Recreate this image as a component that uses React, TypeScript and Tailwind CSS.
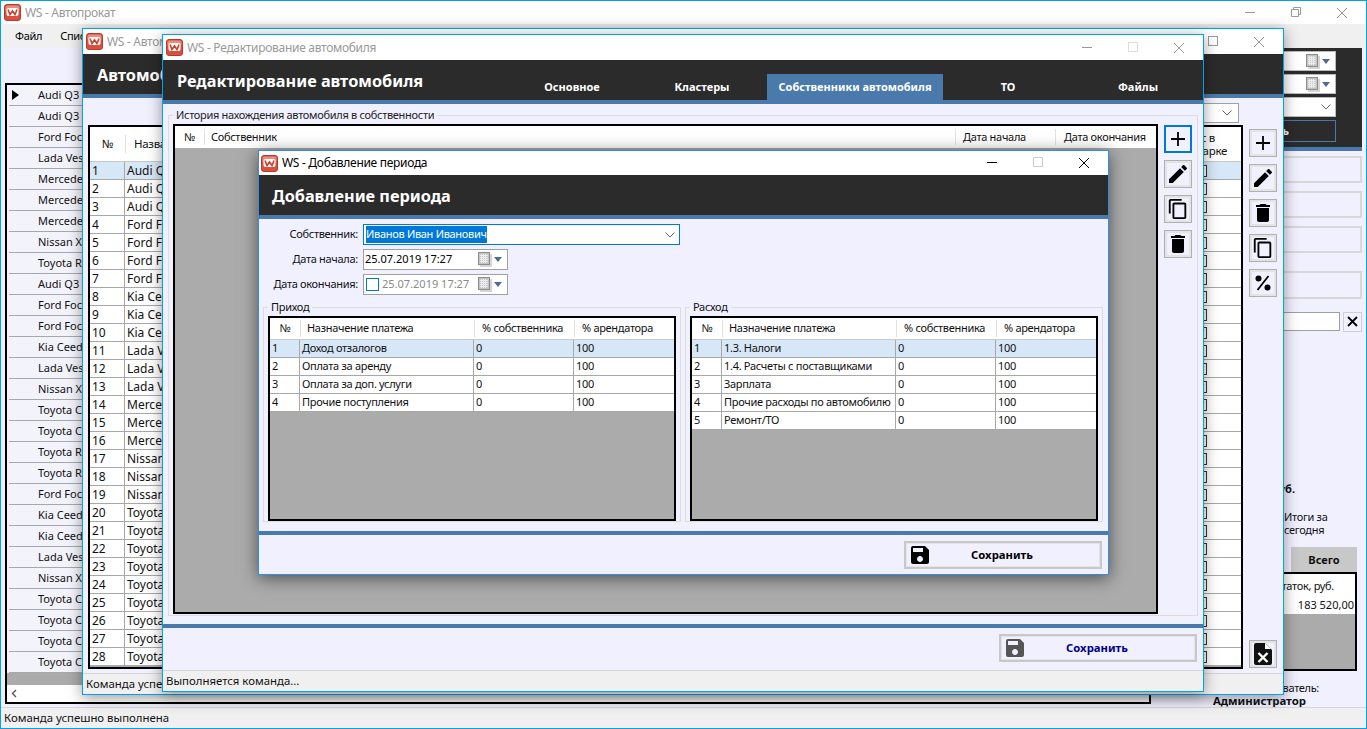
import type { ReactNode } from 'react'
import { MdContentCopy, MdDelete, MdEdit, MdSave } from 'react-icons/md'

const mainRows = [
  'Audi Q3', 'Audi Q3', 'Ford Focus', 'Lada Vesta', 'Mercedes', 'Mercedes', 'Mercedes', 'Nissan X-Trail', 'Toyota RAV4',
  'Audi Q3', 'Ford Focus', 'Ford Focus', 'Kia Ceed', 'Lada Vesta', 'Nissan X-Trail', 'Toyota Camry', 'Toyota Camry',
  'Toyota RAV4', 'Toyota RAV4', 'Ford Focus', 'Kia Ceed', 'Kia Ceed', 'Lada Vesta', 'Nissan X-Trail', 'Toyota Camry',
  'Toyota Camry', 'Toyota Camry', 'Toyota Camry',
]

const carRows = [
  'Audi Q3', 'Audi Q3', 'Audi Q3', 'Ford Focus', 'Ford Focus', 'Ford Focus', 'Ford Focus', 'Kia Ceed', 'Kia Ceed', 'Kia Ceed',
  'Lada Vesta', 'Lada Vesta', 'Lada Vesta', 'Mercedes', 'Mercedes', 'Mercedes', 'Nissan X-Trail', 'Nissan X-Trail', 'Nissan X-Trail',
  'Toyota Camry', 'Toyota Camry', 'Toyota Camry', 'Toyota Camry', 'Toyota Camry', 'Toyota Camry', 'Toyota Camry', 'Toyota Camry', 'Toyota Camry',
]

const incomeRows = ['Доход отзалогов', 'Оплата за аренду', 'Оплата за доп. услуги', 'Прочие поступления']
const expenseRows = ['1.3. Налоги', '1.4. Расчеты с поставщиками', 'Зарплата', 'Прочие расходы по автомобилю', 'Ремонт/ТО']
const tabs = [
  { label: 'Основное', width: 'w-[130px]' },
  { label: 'Кластеры', width: 'w-[130px]' },
  { label: 'Собственники автомобиля', width: 'w-[176px]', active: true },
  { label: 'ТО', width: 'w-[130px]' },
  { label: 'Файлы', width: 'w-[130px]' },
]

const Logo = () => (
  <svg width="17" height="17" viewBox="0 0 17 17" className="shrink-0">
    <rect x="0.5" y="0.5" width="16" height="16" rx="2.5" fill="#d9503f" stroke="#b63a2c" />
    <rect x="1.5" y="1.5" width="14" height="6" rx="2" fill="#ea8c7e" />
    <rect x="2.5" y="4" width="12" height="8" rx="2" fill="#fff" />
    <path d="M4 5.500 L6 10.500 L8.500 7 L11 10.500 L13 5.500" fill="none" stroke="#c8402f" strokeWidth="1.6" />
  </svg>
)

const WinControls = ({ tone, maxTone, restore }: { tone: string; maxTone: string; restore?: boolean }) => (
  <div className="flex pr-px" style={{ color: tone }}>
    <div className="flex h-full w-[46px] items-center justify-center">
      <svg width="10" height="10"><path d="M0 5.500H10" stroke="currentColor" /></svg>
    </div>
    <div className="flex h-full w-[46px] items-center justify-center">
      {restore ? (
        <svg width="10" height="10"><path d="M.5 2.500h7v7h-7zM2.500 2.500v-2h7v7h-2" fill="none" stroke="currentColor" /></svg>
      ) : (
        <svg width="10" height="10"><rect x=".5" y=".5" width="9" height="9" fill="none" stroke={maxTone} /></svg>
      )}
    </div>
    <div className="flex h-full w-[46px] items-center justify-center">
      <svg width="12" height="12"><path d="M1 1L11 11M11 1L1 11" stroke="currentColor" /></svg>
    </div>
  </div>
)

const TitleBar = ({ title, active, height, restore, maxTone = '#ddd' }: { title: string; active?: boolean; height: string; restore?: boolean; maxTone?: string }) => (
  <div className={`flex shrink-0 items-center justify-between bg-white ${active ? 'pl-[2px]' : 'pl-[3px]'} ${height}`}>
    <div className="flex items-center gap-[4px]">
      <Logo />
      <span className={`text-[12px] ${active ? 'text-black' : 'text-[#999]'}`}>{title}</span>
    </div>
    <WinControls tone={active ? '#000' : '#999'} maxTone={maxTone} restore={restore} />
  </div>
)

const Strip = () => <div className="h-1 shrink-0 bg-[#4a79ab]" />

const Header = ({ title, children, tight }: { title: string; children?: ReactNode; tight?: boolean }) => (
  <>
    <div className={`flex h-10 shrink-0 items-center bg-[#2b2b2b] ${tight ? 'pl-[13px]' : 'pl-[14px]'}`}>
      <span className="pt-[2px] text-[16.3px] font-bold tracking-normal whitespace-nowrap text-white">{title}</span>
      {children}
    </div>
    <Strip />
  </>
)

const StatusBar = ({ text }: { text: string }) => (
  <div className="flex h-[21px] shrink-0 items-center border-t border-[#d6d6d6] bg-[#f0f0f0] pl-[3px] text-[11.4px] tracking-normal text-[#111]">{text}</div>
)

const ToolButton = ({ children, focused }: { children: ReactNode; focused?: boolean }) => (
  <button
    className={`flex h-[28px] w-[28px] items-center justify-center bg-[#f0f0ff] text-black ${
      focused ? 'border-2 border-[#0078d7]' : 'border border-[#b0b0b0] shadow-[inset_0_0_0_2px_#e4e4e4]'
    }`}
  >
    {children}
  </button>
)

const PlusIcon = () => (
  <svg width="16" height="16"><path d="M8 1V15M1 8H15" stroke="currentColor" strokeWidth="1.8" /></svg>
)

const PercentIcon = () => (
  <svg width="18" height="18" viewBox="0 0 18 18">
    <circle cx="4.500" cy="4.500" r="3" fill="currentColor" />
    <circle cx="13.500" cy="13.500" r="3" fill="currentColor" />
    <path d="M14.500 2L3.500 16" stroke="currentColor" strokeWidth="1.8" />
  </svg>
)

const FileXIcon = () => (
  <svg width="18" height="22" viewBox="0 0 18 22">
    <path d="M0 2a2 2 0 0 1 2-2h9l7 7v13a2 2 0 0 1-2 2H2a2 2 0 0 1-2-2z" fill="#111" />
    <path d="M11 0v6h6z" fill="#fff" />
    <path d="M4.500 10L13.500 19M13.500 10L4.500 19" stroke="#fff" strokeWidth="2.4" />
  </svg>
)

const CalendarArrow = () => (
  <div className="flex items-center gap-[2px]">
    <svg width="14" height="15" viewBox="0 0 14 15">
      <rect x="2" y="2" width="12" height="13" fill="#d5d5d5" />
      <rect x=".5" y=".5" width="11" height="12" fill="#c4c4c4" stroke="#8c8c8c" />
      <path d="M2 3.500h8M2 5.500h8M2 7.500h8M2 9.500h8M3.500 2v9M5.500 2v9M7.500 2v9" stroke="#ededed" />
    </svg>
    <svg width="9" height="5"><path d="M0 0H8L4 5z" fill="#4f6b94" /></svg>
  </div>
)

const Chevron = () => (
  <svg width="10" height="6" className="shrink-0"><path d="M.5 .5L5 5L9.500 .5" fill="none" stroke="#666" /></svg>
)

const SaveButton = ({ label, inactive }: { label: string; inactive?: boolean }) => (
  <button className="flex h-[28px] w-[198px] items-center border-2 border-[#c8c8c8] bg-[#f0f0ff] pl-[2px] shadow-[inset_0_0_0_1px_#e4e4e4]">
    <MdSave size={24} className={`shrink-0 ${inactive ? 'text-[#555]' : 'text-black'}`} />
    <span className={`flex-1 pr-[28px] text-center text-[11.3px] font-bold tracking-normal ${inactive ? 'text-[#00008b]' : 'text-black'}`}>{label}</span>
  </button>
)

const PeriodTable = ({ rows }: { rows: string[] }) => (
  <div className="flex h-[205px] flex-col border-2 border-black bg-[#ababab]">
    <div className="flex h-[22px] shrink-0 items-center border-b border-[#c8c8c8] bg-white">
      <div className="w-[30px] text-center">№</div>
      <div className="w-[174px] border-l border-[#e2e2e2] pl-[6px]">Назначение платежа</div>
      <div className="w-[100px] border-l border-[#e2e2e2] pl-[7px]">% собственника</div>
      <div className="w-[100px] border-l border-[#e2e2e2] pl-[7px]">% арендатора</div>
    </div>
    {rows.map((name, i) => (
      <div key={name} className={`flex h-[18px] shrink-0 items-center border-b border-[#a8a8a8] ${i === 0 ? 'bg-[#d6e7f7]' : 'bg-white'}`}>
        <div className="h-full w-[30px] border-r border-[#a8a8a8] pl-[2px]">{i + 1}</div>
        <div className="h-full w-[174px] border-r border-[#a8a8a8] pl-[2px] whitespace-nowrap">{name}</div>
        <div className="h-full w-[100px] border-r border-[#a8a8a8] pl-[2px]">0</div>
        <div className="h-full w-[100px] pl-[2px]">100</div>
      </div>
    ))}
  </div>
)

const PeriodGroup = ({ title, rows, width }: { title: string; rows: string[]; width: string }) => (
  <fieldset className={`h-[222px] border border-[#dcdcdc] px-[4px] pt-[2px] ${width}`}>
    <legend className="h-[14px] px-[3px] leading-[14px]">{title}</legend>
    <PeriodTable rows={rows} />
  </fieldset>
)

const DateField = ({ muted }: { muted?: boolean }) => (
  <div className="flex h-[21px] w-[145px] items-center justify-between border border-[#a0a0a0] bg-white pr-[4px] pl-[1px]">
    <div className="flex items-center gap-[3px]">
      {muted && <div className="ml-px h-[13px] w-[13px] border border-[#0078d7] bg-white" />}
      <span className={`tracking-normal ${muted ? 'text-[#8a8a8a]' : 'text-black'}`}>25.07.2019 17:27</span>
    </div>
    <CalendarArrow />
  </div>
)

const MainWindow = () => (
  <div className="absolute inset-0 flex flex-col border border-[#00a2ed] bg-[#f0f0ff]">
    <TitleBar title="WS - Автопрокат" height="h-[23px]" restore />
    <div className="flex h-[24px] shrink-0 items-center gap-[18px] bg-[#f0f0f0] pl-[14px] text-[11px] text-black">
      <span>Файл</span>
      <span>Списки</span>
    </div>
    <div className="flex min-h-0 flex-1 pl-[4px]">
      <div className="mt-[35px] flex h-[621px] w-[1146px] flex-col border-2 border-black bg-[#ababab] tracking-normal">
        <div className="bg-[#f3f3fb] pl-[2px]">
          {mainRows.map((name, i) => (
            <div key={i} className="flex h-[21px] shrink-0 items-center border-b border-[#a8a8a8] pl-[2px]">
              <div className="flex w-[27px] justify-start pl-[1px]">
                {i === 0 && <svg width="7" height="10"><path d="M0 0L7 5L0 10z" fill="#000" /></svg>}
              </div>
              <span>{name}</span>
            </div>
          ))}
        </div>
        <div className="flex-1" />
        <div className="flex h-[17px] shrink-0 items-center bg-white pl-[4px]">
          <svg width="6" height="9"><path d="M5 1L1.500 4.500L5 8" fill="none" stroke="#555" strokeWidth="1.4" /></svg>
        </div>
      </div>
      <div className="flex w-[211px] flex-col">
        <div className="flex h-[100px] flex-col items-end gap-[3px] bg-[#2b2b2b] pt-[3px] pr-[26px]">
          <div className="flex h-[20px] w-[150px] items-center justify-end border border-[#bbb] bg-white pr-[4px]"><CalendarArrow /></div>
          <div className="flex h-[20px] w-[150px] items-center justify-end border border-[#bbb] bg-white pr-[4px]"><CalendarArrow /></div>
          <div className="flex h-[20px] w-[150px] items-center justify-end border border-[#bbb] bg-white pr-[4px]"><Chevron /></div>
          <div className="flex h-[22px] w-[150px] items-center justify-end border border-[#4a79ab] pr-[46px] font-bold tracking-normal text-white">Применить</div>
        </div>
        <Strip />
        <div className="flex flex-col gap-[8px] pt-[5px] pl-[10px]">
          <div className="h-[27px] border-2 border-[#d8d8d8]" />
          <div className="h-[27px] border-2 border-[#d8d8d8]" />
          <div className="h-[27px] border-2 border-[#d8d8d8]" />
          <div className="mt-[10px] h-[28px] border-2 border-[#d8d8d8]" />
        </div>
        <div className="mt-[13px] flex h-[20px] items-center gap-[3px] pl-[10px]">
          <div className="h-[19px] flex-1 border border-[#a0a0a0] bg-white" />
          <div className="flex h-[20px] w-[19px] items-center justify-center border border-[#d0d0d0]">
            <svg width="11" height="11"><path d="M1 1L10 10M10 1L1 10" stroke="#000" strokeWidth="1.8" /></svg>
          </div>
        </div>
        <div className="mt-[149px] pr-[67px] text-right text-[11px] font-bold tracking-normal">Итого, руб.</div>
        <div className="mt-[13px] pl-[133px] text-[11px] leading-[13px]">
          <div>Итоги за</div>
          <div>сегодня</div>
        </div>
        <div className="mt-[11px] ml-[140px] flex h-[25px] w-[66px] items-center justify-center bg-[#c8c8c8] font-bold tracking-normal">Всего</div>
        <div className="mr-[5px] flex h-[100px] flex-col border-2 border-black bg-[#ababab]">
          <div className="h-[23px] bg-white pt-[4px] pr-[21px] text-right">Остаток, руб.</div>
          <div className="h-[17px] bg-white pr-[1px] text-right tracking-normal">183 520,00</div>
        </div>
        <div className="mt-[10px] pr-[43px] text-right leading-[13px]">Пользователь:</div>
        <div className="pr-[56px] text-right text-[11.4px] leading-[13px] font-bold tracking-normal whitespace-nowrap">Администратор</div>
      </div>
    </div>
    <StatusBar text="Команда успешно выполнена" />
  </div>
)

const CarsWindow = () => (
  <div className="absolute top-[28px] left-[82px] flex h-[667px] w-[1202px] flex-col border border-[#00a2ed] bg-[#f0f0ff] shadow-[0_3px_14px_rgba(0,0,0,0.4)]">
    <TitleBar title="WS - Автомобили" height="h-[25px]" maxTone="#999" />
    <Header title="Автомобили" />
    <div className="flex min-h-0 flex-1 pl-[5px]">
      <div className="flex w-[1155px] flex-col">
        <div className="flex h-[27px] items-start justify-end pt-[5px] pr-[4px]">
          <div className="flex h-[20px] w-[190px] items-center justify-end border border-[#a0a0a0] bg-white pr-[6px]"><Chevron /></div>
        </div>
        <div className="flex h-[544px] flex-col border-2 border-black bg-[#ababab]">
          <div className="flex h-[35px] shrink-0 items-center border-b border-[#c8c8c8] bg-white text-[11.500px]">
            <div className="w-[35px] text-center">№</div>
            <div className="flex-1 border-l border-[#e2e2e2] pl-[8px]">Название</div>
            <div className="flex w-[60px] flex-col items-end leading-[13px] whitespace-nowrap">
              <div className="mr-[26px]">Статус в</div>
              <div className="mr-[14px]">парке</div>
            </div>
          </div>
          {carRows.map((name, i) => (
            <div key={i} className={`flex h-[18px] shrink-0 items-center border-b border-[#a8a8a8] tracking-normal ${i === 0 ? 'bg-[#d6e7f7]' : 'bg-white'}`}>
              <div className="h-full w-[35px] border-r border-[#a8a8a8] pl-[2px] text-[12px]">{i + 1}</div>
              <div className="h-full flex-1 pl-[2px] text-[12px]">{name}</div>
              <div className="flex h-full w-[60px] items-center pl-[14px]">
                <svg width="12" height="12"><rect x=".5" y=".5" width="11" height="11" fill="#fff" stroke="#333" /><path d="M3 6L5 9L9 3" fill="none" stroke="#444" /></svg>
              </div>
            </div>
          ))}
        </div>
      </div>
      <div className="flex flex-col gap-[7px] pt-[31px] pl-[6px]">
        <ToolButton><PlusIcon /></ToolButton>
        <ToolButton><MdEdit size={24} /></ToolButton>
        <ToolButton><MdDelete size={24} /></ToolButton>
        <ToolButton><MdContentCopy size={22} /></ToolButton>
        <ToolButton><PercentIcon /></ToolButton>
        <div className="mt-[336px]"><ToolButton><FileXIcon /></ToolButton></div>
      </div>
    </div>
    <StatusBar text="Команда успешно выполнена" />
  </div>
)

const EditWindow = () => (
  <div className="absolute top-[34px] left-[162px] flex h-[658px] w-[1042px] flex-col border border-[#00a2ed] bg-[#f0f0ff] shadow-[0_3px_14px_rgba(0,0,0,0.4)]">
    <TitleBar title="WS - Редактирование автомобиля" height="h-[25px]" />
    <Header title="Редактирование автомобиля">
      <div className="ml-auto flex h-full items-end font-bold tracking-normal text-white">
        {tabs.map((tab) => (
          <div key={tab.label} className={`flex h-[26px] items-center justify-center ${tab.width} ${tab.active ? 'bg-[#4a79ab]' : ''}`}>
            {tab.label}
          </div>
        ))}
      </div>
    </Header>
    <div className="flex h-[520px] shrink-0 gap-[6px] pt-[4px] pl-[5px]">
      <fieldset className="flex h-[508px] w-[1030px] gap-[6px] border border-[#dcdcdc] pt-[2px] pr-[4px] pl-[4px]">
        <legend className="h-[14px] px-[3px] leading-[14px] text-[#222]">История нахождения автомобиля в собственности</legend>
        <div className="flex h-[490px] w-[985px] flex-col border-2 border-black bg-[#ababab]">
          <div className="flex h-[22px] shrink-0 items-center bg-white">
            <div className="w-[29px] text-center">№</div>
            <div className="flex-1 border-l border-[#e2e2e2] pl-[6px]">Собственник</div>
            <div className="w-[100px] border-l border-[#e2e2e2] pl-[7px]">Дата начала</div>
            <div className="w-[101px] border-l border-[#e2e2e2] pl-[8px] whitespace-nowrap">Дата окончания</div>
          </div>
        </div>
        <div className="flex flex-col gap-[7px] pt-[1px]">
          <ToolButton focused><PlusIcon /></ToolButton>
          <ToolButton><MdEdit size={24} /></ToolButton>
          <ToolButton><MdContentCopy size={22} /></ToolButton>
          <ToolButton><MdDelete size={24} /></ToolButton>
        </div>
      </fieldset>
    </div>
    <Strip />
    <div className="flex flex-1 justify-end pt-[6px] pr-[6px]">
      <SaveButton label="Сохранить" inactive />
    </div>
    <StatusBar text="Выполняется команда..." />
  </div>
)

const FormRow = ({ label, children }: { label: string; children: ReactNode }) => (
  <div className="flex items-center gap-[5px]">
    <div className="w-[99px] text-right whitespace-nowrap">{label}</div>
    {children}
  </div>
)

const PeriodWindow = () => (
  <div className="absolute top-[150px] left-[258px] flex h-[425px] w-[851px] flex-col border border-[#2f8fe8] bg-[#f0f0ff] shadow-[0_3px_16px_rgba(0,0,0,0.55)]">
    <TitleBar title="WS - Добавление периода" active height="h-[24px]" maxTone="#ccc" />
    <Header title="Добавление периода" tight />
    <div className="flex flex-col gap-[4px] pt-[5px]">
      <FormRow label="Собственник:">
        <div className="flex h-[21px] w-[317px] items-center justify-between border border-[#0078d7] bg-white pr-[4px] pl-[2px]">
          <span className="bg-[#0078d7] text-white">Иванов Иван Иванович</span>
          <Chevron />
        </div>
      </FormRow>
      <FormRow label="Дата начала:"><DateField /></FormRow>
      <FormRow label="Дата окончания:"><DateField muted /></FormRow>
    </div>
    <div className="mt-[5px] flex gap-[4px] pl-[4px]">
      <PeriodGroup title="Приход" rows={incomeRows} width="w-[418px]" />
      <PeriodGroup title="Расход" rows={expenseRows} width="w-[416px]" />
    </div>
    <div className="mt-[9px]"><Strip /></div>
    <div className="flex flex-1 justify-end pt-[6px] pr-[6px]">
      <SaveButton label="Сохранить" />
    </div>
  </div>
)

export default function App() {
  return (
    <div className="relative h-[729px] w-[1367px] overflow-hidden bg-white font-['Noto_Sans','Open_Sans',sans-serif] text-[11px] tracking-[-0.3px] text-[#111]">
      <MainWindow />
      <CarsWindow />
      <EditWindow />
      <PeriodWindow />
    </div>
  )
}
